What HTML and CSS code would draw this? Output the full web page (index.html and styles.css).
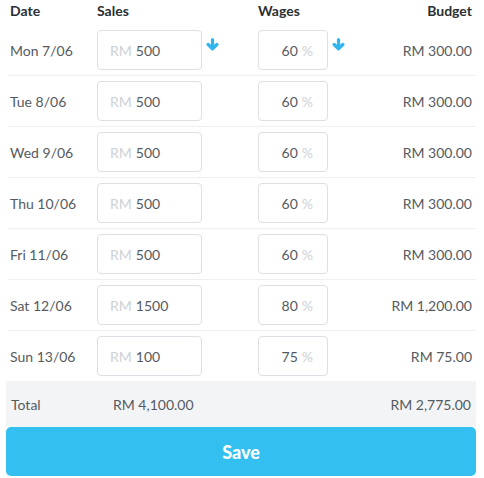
FILE: index.html
```html
<!DOCTYPE html>
<html lang="en">
<head>
  <meta charset="UTF-8">
  <title>Weekly Budget</title>
  <meta name="viewport" content="width=device-width, initial-scale=1.0">
  <link rel="stylesheet" href="styles.css">
</head>
<body>
<div class="wrapper">
  <div class="row row-head">
    <div>Date</div>
    <div>Sales</div>
    <div>Wages</div>
    <div class="right">Budget</div>
  </div>

  <div id="rows"></div>

  <div class="total">
    <div>Total</div>
    <div>RM 4,100.00</div>
    <div></div>
    <div class="right">RM 2,775.00</div>
  </div>

  <button class="btn-save">Save</button>
</div>

<script>
  const days = [
    { date: "Mon 7/06", sales: "500", wages: "60", budget: "RM 300.00", arrows: true },
    { date: "Tue 8/06", sales: "500", wages: "60", budget: "RM 300.00" },
    { date: "Wed 9/06", sales: "500", wages: "60", budget: "RM 300.00" },
    { date: "Thu 10/06", sales: "500", wages: "60", budget: "RM 300.00" },
    { date: "Fri 11/06", sales: "500", wages: "60", budget: "RM 300.00" },
    { date: "Sat 12/06", sales: "1500", wages: "80", budget: "RM 1,200.00" },
    { date: "Sun 13/06", sales: "100", wages: "75", budget: "RM 75.00" }
  ];

  const arrow = `<svg class="arrow" width="13" height="13" viewBox="0 0 12 12">
    <path d="M6 1.5 V9.5 M2 6 L6 10 L10 6" fill="none" stroke="#2fb6ee" stroke-width="3" stroke-linecap="round" stroke-linejoin="round"/>
  </svg>`;

  let html = "";
  days.forEach(day => {
    html += `
      <div class="row">
        <div class="date">${day.date}</div>
        <div class="cell">
          <div class="input input-sales"><span class="unit">RM</span> <span>${day.sales}</span></div>
          ${day.arrows ? arrow : ""}
        </div>
        <div class="cell">
          <div class="input input-wages"><span>${day.wages}</span> <span class="unit">%</span></div>
          ${day.arrows ? arrow : ""}
        </div>
        <div class="right value">${day.budget}</div>
      </div>
    `;
  });
  document.getElementById("rows").innerHTML = html;
</script>
</body>
</html>
```

FILE: styles.css
```css
body {
  font-family: Lato, "Open Sans", sans-serif;
  margin: 0;
  padding: 0;
  color: #555a60;
  background: #fff;
}

.wrapper {
  padding: 0 8px 0 6px;
}

.row {
  display: grid;
  grid-template-columns: 87px 161px 1fr auto;
  align-items: center;
  height: 50px;
  margin-left: 2px;
  padding: 0 4px 0 2px;
  border-bottom: 1px solid #eeeff1;
  font-size: 14px;
}

.row:last-child {
  border-bottom: none;
}

.row-head {
  height: 25px;
  border-bottom: none;
  font-weight: bold;
  color: #2b2f33;
  align-items: start;
  padding-top: 2px;
  box-sizing: border-box;
}

.right {
  text-align: right;
}

.cell {
  display: flex;
  align-items: center;
}

.input {
  box-sizing: border-box;
  height: 40px;
  border: 1px solid #dcdfe3;
  border-radius: 4px;
  display: flex;
  align-items: center;
  gap: 4px;
  color: #555a60;
}

.input-sales {
  width: 105px;
  padding-left: 12px;
}

.input-wages {
  width: 70px;
  justify-content: flex-end;
  padding-right: 14px;
}

.unit {
  color: #cdd2d7;
}

.arrow {
  margin-left: 4px;
  margin-top: -12px;
}

.total {
  display: grid;
  grid-template-columns: 102px 161px 1fr auto;
  align-items: center;
  height: 46px;
  padding: 0 5px 0 5px;
  background: #f3f4f6;
  font-size: 14px;
}

.btn-save {
  display: block;
  width: 100%;
  height: 49px;
  border: none;
  border-radius: 5px;
  background: #33c0f0;
  color: #fff;
  font-family: Lato, "Open Sans", sans-serif;
  font-size: 18px;
  font-weight: 900;
  cursor: pointer;
}
```
